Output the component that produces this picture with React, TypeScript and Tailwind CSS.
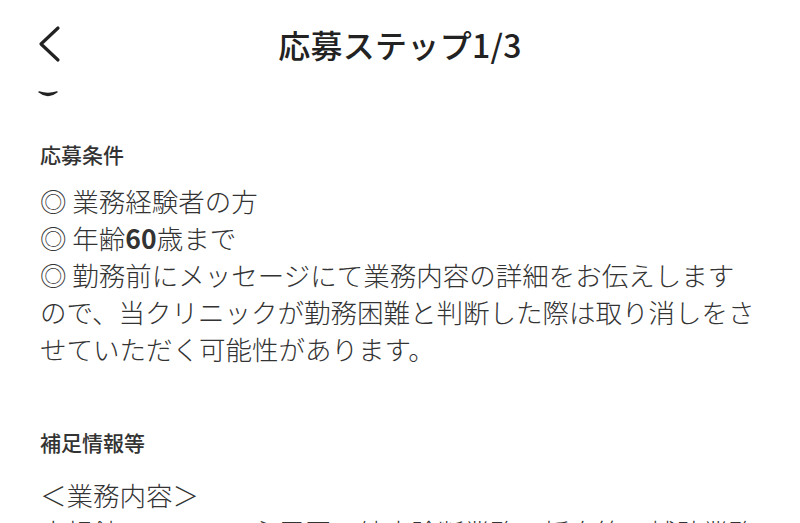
import React from "react"

const font = { fontFamily: '"Noto Sans CJK JP", "Noto Sans", sans-serif' }

function BackIcon() {
  return (
    <svg width="26" height="38" viewBox="0 0 26 38" fill="none">
      <polyline
        points="22,3 5,19 22,35"
        stroke="#222"
        strokeWidth="3.2"
        strokeLinecap="round"
        strokeLinejoin="round"
      />
    </svg>
  )
}

const conditions = [
  <>業務経験者の方</>,
  <>
    年齢<span className="font-semibold">60</span>歳まで
  </>,
  <>勤務前にメッセージにて業務内容の詳細をお伝えしますので、当クリニックが勤務困難と判断した際は取り消しをさせていただく可能性があります。</>,
]

export default function App() {
  return (
    <div className="w-[800px] h-[523px] overflow-hidden bg-white text-[#333]" style={font}>
      <header className="grid grid-cols-[1fr_auto_1fr] items-center h-[88px] px-[36px]">
        <button className="flex items-center justify-start">
          <BackIcon />
        </button>
        <h1 className="text-[32px] font-medium text-[#222] tracking-[0.3px]">応募ステップ1/3</h1>
        <div />
      </header>

      <div className="px-10">
        {/* bottom of a control scrolled out of view */}
        <svg width="20" height="8" viewBox="0 0 20 8" className="-ml-[2px] mt-[2px] block">
          <path d="M1 2 Q10 9 19 2 Q10 5 1 2 Z" stroke="#222" strokeWidth="1.4" fill="#222" strokeLinejoin="round" />
        </svg>

        <section className="mt-[42px]">
          <h2 className="text-[21px] leading-[28px] font-medium text-[#333]">応募条件</h2>
          <ul className="mt-[14px] text-[26.5px] leading-[37px] font-light">
            {conditions.map((c, i) => (
              <li key={i}>◎ {c}</li>
            ))}
          </ul>
        </section>

        <section className="mt-[61px]">
          <h2 className="text-[21px] leading-[28px] font-medium text-[#333]">補足情報等</h2>
          <div className="mt-[20px] text-[26.5px] leading-[37px] font-light">
            <p>＜業務内容＞</p>
            <p>内視鏡・エコー・心電図・健康診断業務・採血等の補助業務</p>
          </div>
        </section>
      </div>
    </div>
  )
}
